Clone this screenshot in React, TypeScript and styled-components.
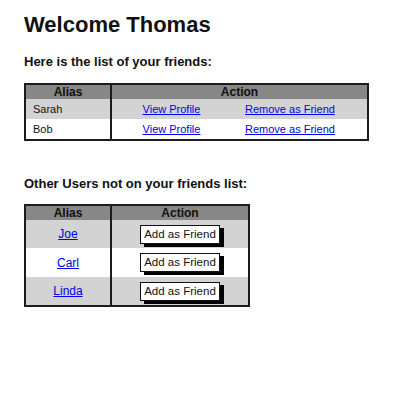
import React from 'react';
import styled, { createGlobalStyle } from 'styled-components';

const GlobalStyle = createGlobalStyle`
  body {
    margin: 0;
    background: #fff;
    font-family: "Liberation Sans", Arial, sans-serif;
    color: #111;
  }
`;

const Page = styled.div`
  padding: 12px 24px;
`;

const Title = styled.h1`
  margin: 0;
  font-size: 22px;
  line-height: 25px;
  font-weight: bold;
`;

const Heading = styled.h2<{ $gap: number }>`
  margin: ${(p) => p.$gap}px 0 0;
  font-size: 13px;
  line-height: 15px;
  font-weight: bold;
`;

const Table = styled.div<{ $cols: string; $width: number; $gap: number }>`
  margin-top: ${(p) => p.$gap}px;
  width: ${(p) => p.$width}px;
  box-sizing: border-box;
  display: grid;
  grid-template-columns: ${(p) => p.$cols};
  border: 2px solid #1c1c1c;
  font-size: 11px;
`;

const HeadCell = styled.div<{ $span?: number; $divider?: boolean }>`
  grid-column: span ${(p) => p.$span || 1};
  height: 14px;
  line-height: 14px;
  background: #878787;
  font-size: 12px;
  font-weight: bold;
  text-align: center;
  border-right: ${(p) => (p.$divider ? '2px solid #1c1c1c' : 'none')};
`;

const Cell = styled.div<{
  $alt?: boolean;
  $divider?: boolean;
  $align?: 'left' | 'center';
  $height: number;
  $pad?: number;
}>`
  height: ${(p) => p.$height}px;
  display: flex;
  align-items: center;
  justify-content: ${(p) => (p.$align === 'left' ? 'flex-start' : 'center')};
  padding-left: ${(p) => p.$pad || 0}px;
  background: ${(p) => (p.$alt ? '#d3d3d3' : '#fff')};
  border-right: ${(p) => (p.$divider ? '2px solid #1c1c1c' : 'none')};
`;

const Link = styled.a<{ $size?: number }>`
  color: #0000ee;
  text-decoration: underline;
  font-size: ${(p) => p.$size || 11}px;
  cursor: pointer;
`;

const AddButton = styled.button`
  font-family: "Liberation Sans", Arial, sans-serif;
  font-size: 11.5px;
  line-height: 13px;
  padding: 2px 3px;
  white-space: nowrap;
  background: #fff;
  color: #111;
  border: 1.5px solid #111;
  border-radius: 0;
  box-shadow: 4px 3px 0 #000;
  cursor: pointer;
`;

const friends = ['Sarah', 'Bob'];
const others = ['Joe', 'Carl', 'Linda'];

export default function App() {
  return (
    <Page>
      <GlobalStyle />
      <Title>Welcome Thomas</Title>
      <Heading $gap={17}>Here is the list of your friends:</Heading>
      <Table $cols="86px 119px 1fr" $width={345} $gap={14}>
        <HeadCell $divider>Alias</HeadCell>
        <HeadCell $span={2}>Action</HeadCell>
        {friends.map((name, i) => (
          <React.Fragment key={name}>
            <Cell $alt={i % 2 === 0} $divider $align="left" $pad={7} $height={20}>
              {name}
            </Cell>
            <Cell $alt={i % 2 === 0} $height={20}>
              <Link>View Profile</Link>
            </Cell>
            <Cell $alt={i % 2 === 0} $align="left" $pad={14} $height={20}>
              <Link>Remove as Friend</Link>
            </Cell>
          </React.Fragment>
        ))}
      </Table>
      <Heading $gap={35}>Other Users not on your friends list:</Heading>
      <Table $cols="86px 1fr" $width={226} $gap={13}>
        <HeadCell $divider>Alias</HeadCell>
        <HeadCell>Action</HeadCell>
        {others.map((name, i) => (
          <React.Fragment key={name}>
            <Cell $alt={i % 2 === 0} $divider $height={i === 1 ? 29 : 28}>
              <Link $size={12}>{name}</Link>
            </Cell>
            <Cell $alt={i % 2 === 0} $height={i === 1 ? 29 : 28}>
              <AddButton>Add as Friend</AddButton>
            </Cell>
          </React.Fragment>
        ))}
      </Table>
    </Page>
  );
}
